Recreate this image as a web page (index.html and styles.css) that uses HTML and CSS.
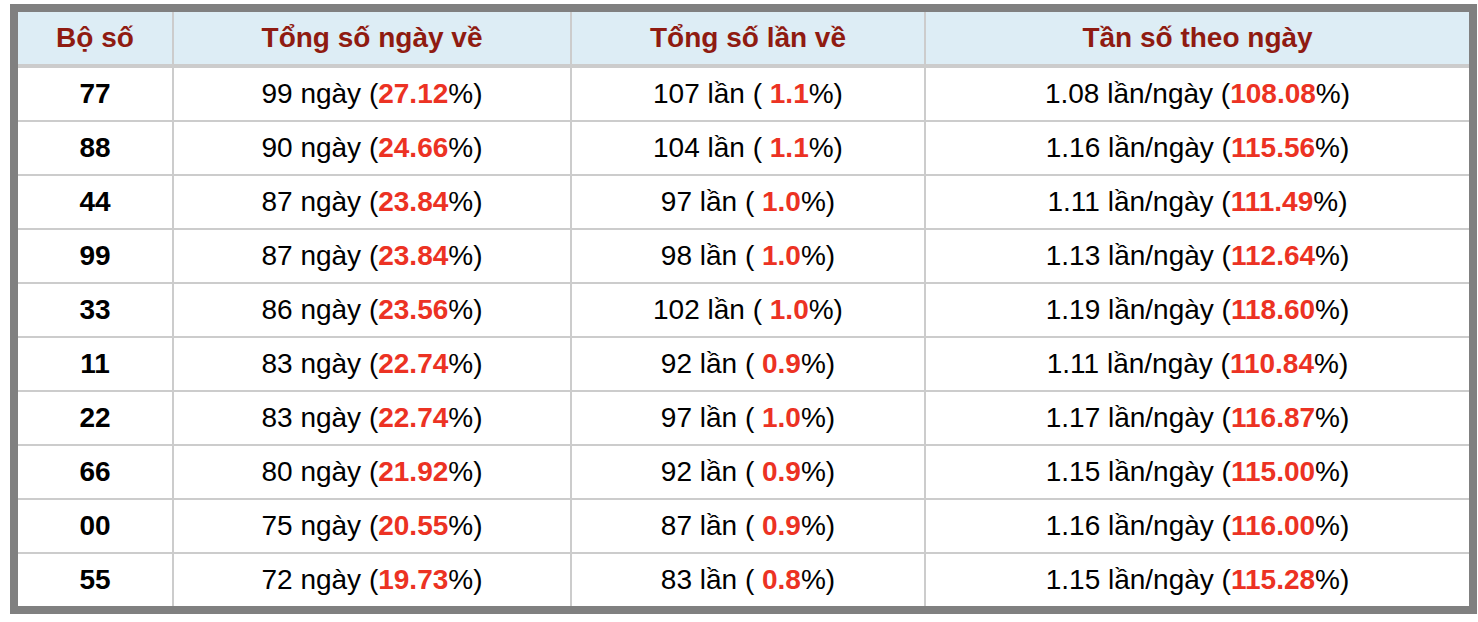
FILE: index.html
```html
<!DOCTYPE html>
<html lang="vi">
<head>
<meta charset="utf-8">
<title>Bộ số</title>
<link rel="stylesheet" href="styles.css">
</head>
<body>
<table class="stats">
  <colgroup>
    <col class="c1"><col class="c2"><col class="c3"><col class="c4">
  </colgroup>
  <thead>
    <tr><th>Bộ số</th><th>Tổng số ngày về</th><th>Tổng số lần về</th><th>Tần số theo ngày</th></tr>
  </thead>
  <tbody>
    <tr><td class="num">77</td><td>99 ngày (<b>27.12</b>%)</td><td>107 lần ( <b>1.1</b>%)</td><td>1.08 lần/ngày (<b>108.08</b>%)</td></tr>
    <tr><td class="num">88</td><td>90 ngày (<b>24.66</b>%)</td><td>104 lần ( <b>1.1</b>%)</td><td>1.16 lần/ngày (<b>115.56</b>%)</td></tr>
    <tr><td class="num">44</td><td>87 ngày (<b>23.84</b>%)</td><td>97 lần ( <b>1.0</b>%)</td><td>1.11 lần/ngày (<b>111.49</b>%)</td></tr>
    <tr><td class="num">99</td><td>87 ngày (<b>23.84</b>%)</td><td>98 lần ( <b>1.0</b>%)</td><td>1.13 lần/ngày (<b>112.64</b>%)</td></tr>
    <tr><td class="num">33</td><td>86 ngày (<b>23.56</b>%)</td><td>102 lần ( <b>1.0</b>%)</td><td>1.19 lần/ngày (<b>118.60</b>%)</td></tr>
    <tr><td class="num">11</td><td>83 ngày (<b>22.74</b>%)</td><td>92 lần ( <b>0.9</b>%)</td><td>1.11 lần/ngày (<b>110.84</b>%)</td></tr>
    <tr><td class="num">22</td><td>83 ngày (<b>22.74</b>%)</td><td>97 lần ( <b>1.0</b>%)</td><td>1.17 lần/ngày (<b>116.87</b>%)</td></tr>
    <tr><td class="num">66</td><td>80 ngày (<b>21.92</b>%)</td><td>92 lần ( <b>0.9</b>%)</td><td>1.15 lần/ngày (<b>115.00</b>%)</td></tr>
    <tr><td class="num">00</td><td>75 ngày (<b>20.55</b>%)</td><td>87 lần ( <b>0.9</b>%)</td><td>1.16 lần/ngày (<b>116.00</b>%)</td></tr>
    <tr><td class="num">55</td><td>72 ngày (<b>19.73</b>%)</td><td>83 lần ( <b>0.8</b>%)</td><td>1.15 lần/ngày (<b>115.28</b>%)</td></tr>
  </tbody>
</table>
</body>
</html>
```
FILE: styles.css
```css
html, body {
  margin: 0;
  padding: 0;
  background: #ffffff;
}
body {
  padding: 4px 0 0 10px;
  font-family: "Liberation Sans", Arial, Helvetica, sans-serif;
}
.stats {
  width: 1467px;
  table-layout: fixed;
  border-collapse: separate;
  border-spacing: 0;
  border: 8px solid #808080;
  font-size: 28px;
  color: #000;
}
.c1 { width: 156px; }
.c2 { width: 398px; }
.c3 { width: 354px; }
.c4 { width: 543px; }
.stats th,
.stats td {
  padding: 0;
  text-align: center;
  vertical-align: middle;
  border-right: 2px solid #cccccc;
  border-bottom: 2px solid #cccccc;
  white-space: nowrap;
  line-height: 1.15;
}
.stats th:last-child,
.stats td:last-child {
  border-right: none;
}
.stats tbody tr:last-child td {
  border-bottom: none;
}
.stats th {
  height: 52px;
  background: #ddedf5;
  color: #8f1b11;
  font-weight: bold;
  border-bottom: 4px solid #cccccc;
}
.stats td {
  height: 52px;
}
.stats td.num {
  font-weight: bold;
}
.stats td b {
  color: #ec3223;
  font-weight: bold;
}
```
